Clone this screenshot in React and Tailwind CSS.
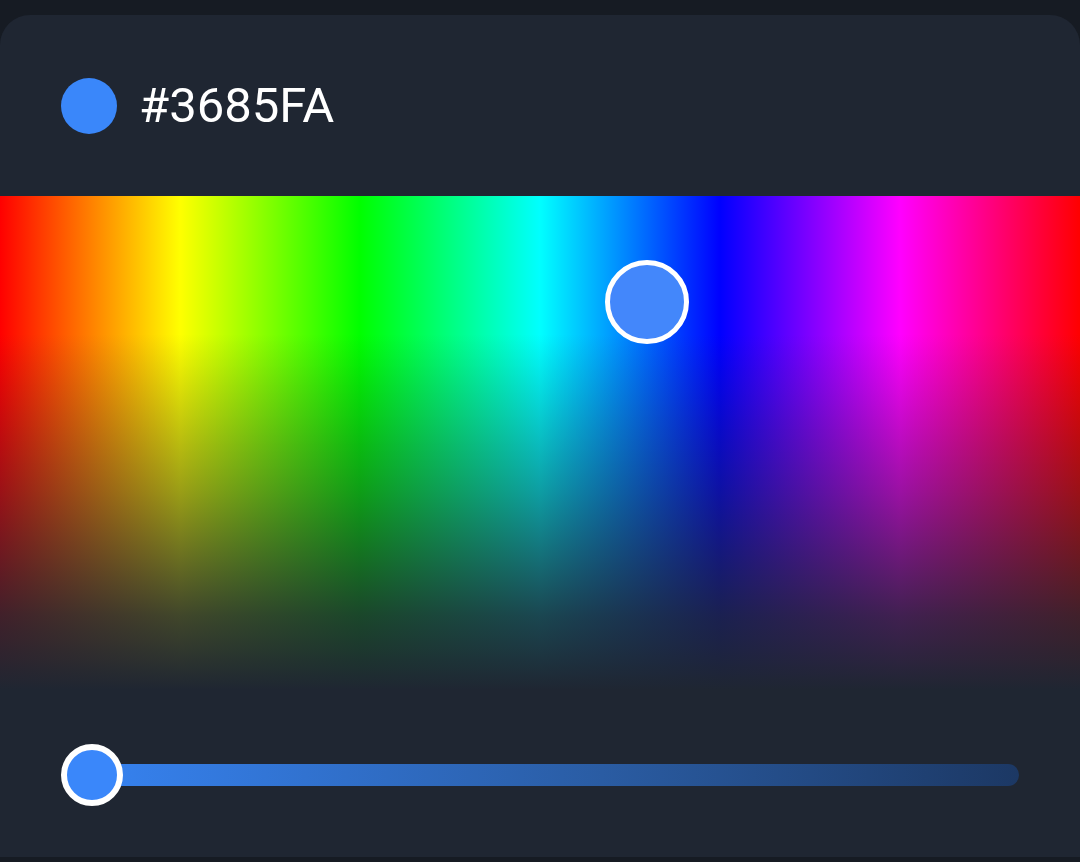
import React from "react";

const HUE =
    "linear-gradient(to right, #ff0000 0%, #ffff00 16.67%, #00ff00 33.33%, #00ffff 50%, #0000ff 66.67%, #ff00ff 83.33%, #ff0000 100%)";

export default function App() {
    const hex = "#3685FA";

    return (
        <div
            className="w-[1080px] h-[862px] bg-[#161b23] pt-[15px] pb-[5px]"
            style={{ fontFamily: "Roboto, 'Noto Sans', sans-serif" }}
        >
            <div className="h-full bg-[#1f2632] rounded-t-[30px] flex flex-col overflow-hidden">
                {/* header */}
                <div className="h-[181px] flex items-center pl-[61px] gap-[22px]">
                    <div className="w-[56px] h-[56px] rounded-full bg-[#3a87fa]" />
                    <span className="text-white text-[49px] leading-none">
                        {hex}
                    </span>
                </div>

                {/* spectrum */}
                <div className="relative h-[494px]" style={{ background: HUE }}>
                    <div className="absolute inset-0 bg-[linear-gradient(to_bottom,rgba(31,38,50,0)_0%,rgba(31,38,50,0)_28%,rgba(31,38,50,0.45)_60%,rgba(31,38,50,0.85)_85%,#1f2632_100%)]" />
                    <div className="absolute left-[605px] top-[64px] w-[84px] h-[84px] rounded-full border-[5px] border-white bg-[#4387fb]" />
                </div>

                {/* slider */}
                <div className="flex-1 flex items-center px-[61px] pt-[2px]">
                    <div className="relative w-full h-[62px] flex items-center">
                        <div className="ml-[31px] flex-1 h-[22px] rounded-full bg-[linear-gradient(to_right,#3682f0,#2a5ca3_55%,#1c3864)]" />
                        <div className="absolute left-0 top-0 w-[62px] h-[62px] rounded-full border-[6px] border-white bg-[#3a87fa]" />
                    </div>
                </div>
            </div>
        </div>
    );
}
